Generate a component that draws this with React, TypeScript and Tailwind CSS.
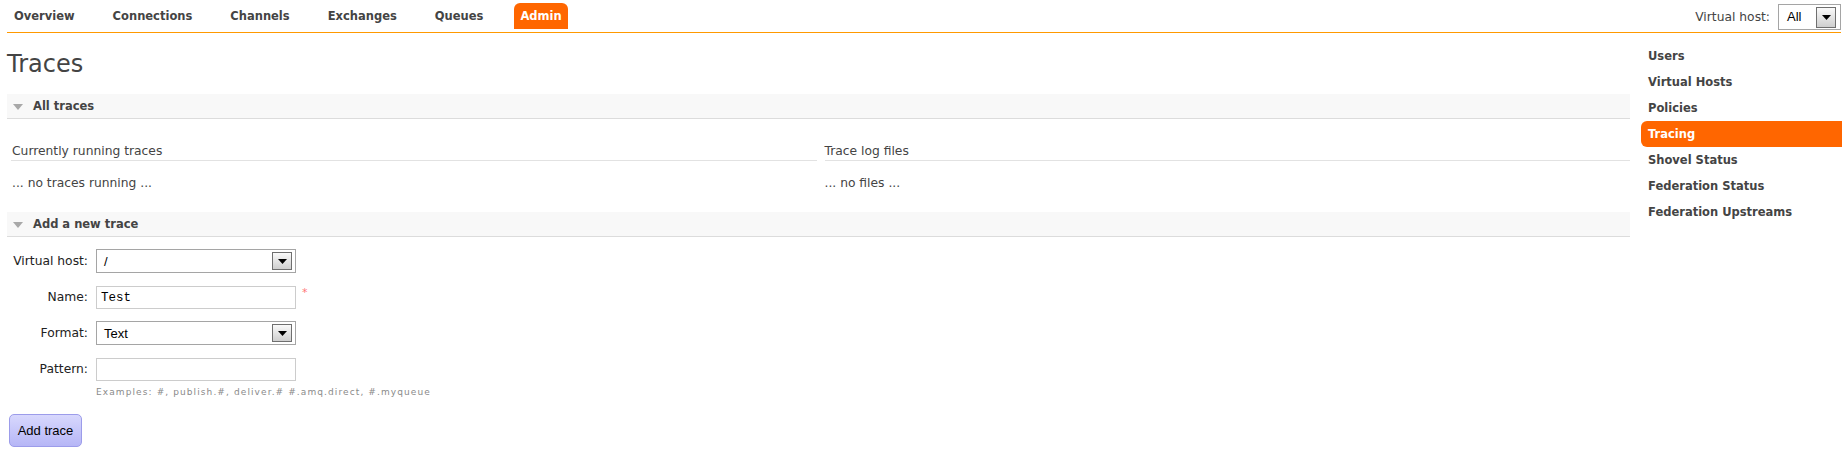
import React from "react";

function DropBtn({ h }: { h: string }) {
  return (
    <div className={`${h} w-[20px] border border-[#6f6f6f] bg-gradient-to-b from-[#fafafa] to-[#cfcfcf] flex items-center justify-center`}>
      <svg width="9" height="5" viewBox="0 0 9 5">
        <polygon points="0,0 9,0 4.5,5" fill="#000" />
      </svg>
    </div>
  );
}

function Section({ title, className }: { title: string; className?: string }) {
  return (
    <div className={`h-[25px] bg-[#f8f8f8] border-b border-[#dcdcdc] flex items-center ${className ?? ""}`}>
      <svg width="10" height="6" viewBox="0 0 10 6" className="ml-[6px] mt-[1px]">
        <polygon points="0,0 10,0 5,6" fill="#a8a8a8" />
      </svg>
      <span className="ml-[10px] pt-[2px] text-[11.5px] font-bold text-[#444]">{title}</span>
    </div>
  );
}

export default function App() {
  const navItems = ["Overview", "Connections", "Channels", "Exchanges", "Queues"];
  const side = [
    "Users",
    "Virtual Hosts",
    "Policies",
    "Tracing",
    "Shovel Status",
    "Federation Status",
    "Federation Upstreams",
  ];
  return (
    <div className="w-[1842px] h-[462px] overflow-hidden bg-white text-[#444] font-['DejaVu_Sans',Verdana,sans-serif]">
      {/* top bar */}
      <div className="ml-[7px] mr-[1px] h-[33px] border-b border-[#f90] flex items-start justify-between">
        <ul className="flex gap-[24px] pt-[3px]">
          {navItems.map((n) => (
            <li key={n} className="h-[26px] px-[7px] pt-[1px] flex items-center text-[11.5px] font-bold text-[#444]">
              {n}
            </li>
          ))}
          <li className="h-[26px] px-[6px] pt-[1px] flex items-center text-[11.5px] font-bold bg-[#f60] text-white rounded-t-[6px]">
            Admin
          </li>
        </ul>
        <div className="flex items-center pt-[4px]">
          <span className="text-[12.3px] text-[#444] mr-[8px]">Virtual host:</span>
          <div className="w-[63px] h-[26px] border border-[#a5a5a5] bg-white flex items-center justify-between font-['Liberation_Sans',Arial,sans-serif] text-[13px] text-black">
            <span className="pl-[8px]">All</span>
            <div className="mr-[4px]">
              <DropBtn h="h-[21px]" />
            </div>
          </div>
        </div>
      </div>

      <div className="flex">
        {/* main */}
        <div className="ml-[7px] w-[1623px]">
          <h1 className="mt-[15px] h-[30px] leading-[30px] pt-[1px] text-[24px] font-normal text-[#444]">Traces</h1>
          <Section title="All traces" className="mt-[16px]" />
          <div className="grid grid-cols-2 gap-[8px] pl-[4px] mt-[23px]">
            <div>
              <div className="leading-[16px] pt-[1px] pb-[1px] border-b border-[#e2e2e2] text-[12.3px] pl-[1px]">Currently running traces</div>
              <div className="mt-[13px] leading-[16px] pt-[1px] text-[12.3px] pl-[1px]">... no traces running ...</div>
            </div>
            <div>
              <div className="leading-[16px] pt-[1px] pb-[1px] border-b border-[#e2e2e2] text-[12.3px]">Trace log files</div>
              <div className="mt-[13px] leading-[16px] pt-[1px] text-[12.3px]">... no files ...</div>
            </div>
          </div>

          <Section title="Add a new trace" className="mt-[21px]" />

          {/* form */}
          <div className="flex flex-col">
            <div className="mt-[12px] flex items-center h-[24px]">
              <label className="w-[81px] text-right text-[12.3px] text-[#222]">Virtual host:</label>
              <div className="ml-[8px] w-[200px] h-[24px] border border-[#a5a5a5] bg-white flex items-center justify-between font-['Liberation_Sans',Arial,sans-serif] text-[13px] text-black">
                <span className="pl-[7px] pt-[1px]">/</span>
                <div className="mr-[3px]">
                  <DropBtn h="h-[18px]" />
                </div>
              </div>
            </div>
            <div className="mt-[13px] flex items-center h-[23px]">
              <label className="w-[81px] text-right text-[12.3px] text-[#222]">Name:</label>
              <div className="ml-[8px] w-[200px] h-[23px] border border-[#cccccc] bg-white flex items-center font-['Liberation_Mono','Courier_New',monospace] text-[12.5px] text-black">
                <span className="pl-[4px] pt-[2px]">Test</span>
              </div>
              <span className="ml-[6px] self-start mt-[1px] text-[11px] text-[#f77] leading-[12px]">*</span>
            </div>
            <div className="mt-[12px] flex items-center h-[24px]">
              <label className="w-[81px] text-right text-[12.3px] text-[#222]">Format:</label>
              <div className="ml-[8px] w-[200px] h-[24px] border border-[#a5a5a5] bg-white flex items-center justify-between font-['Liberation_Sans',Arial,sans-serif] text-[13px] text-black">
                <span className="pl-[7px] pt-[2px]">Text</span>
                <div className="mr-[3px]">
                  <DropBtn h="h-[18px]" />
                </div>
              </div>
            </div>
            <div className="mt-[13px] flex items-center h-[23px]">
              <label className="w-[81px] text-right text-[12.3px] text-[#222]">Pattern:</label>
              <div className="ml-[8px] w-[200px] h-[23px] border border-[#cccccc] bg-white" />
            </div>
            <div className="mt-[5px] ml-[89px] h-[12px] leading-[12px] text-[9px] tracking-[1.1px] text-[#8a8a8a] whitespace-nowrap">
              Examples: #, publish.#, deliver.# #.amq.direct, #.myqueue
            </div>
            <div className="mt-[16px] ml-[2px]">
              <button className="w-[73px] h-[33px] rounded-[5px] border border-[#9c9cea] bg-gradient-to-b from-[#d8d8fd] to-[#b6b6f6] font-['Liberation_Sans',Arial,sans-serif] text-[13px] text-black">
                Add trace
              </button>
            </div>
          </div>
        </div>

        {/* sidebar */}
        <div className="ml-[11px] w-[201px] pt-[10px]">
          {side.map((s) => (
            <div
              key={s}
              className={
                s === "Tracing"
                  ? "h-[26px] pl-[7px] pt-[2px] flex items-center text-[11.5px] font-bold bg-[#f60] text-white rounded-l-[6px]"
                  : "h-[26px] pl-[7px] pt-[2px] flex items-center text-[11.5px] font-bold text-[#444]"
              }
            >
              {s}
            </div>
          ))}
        </div>
      </div>
    </div>
  );
}
